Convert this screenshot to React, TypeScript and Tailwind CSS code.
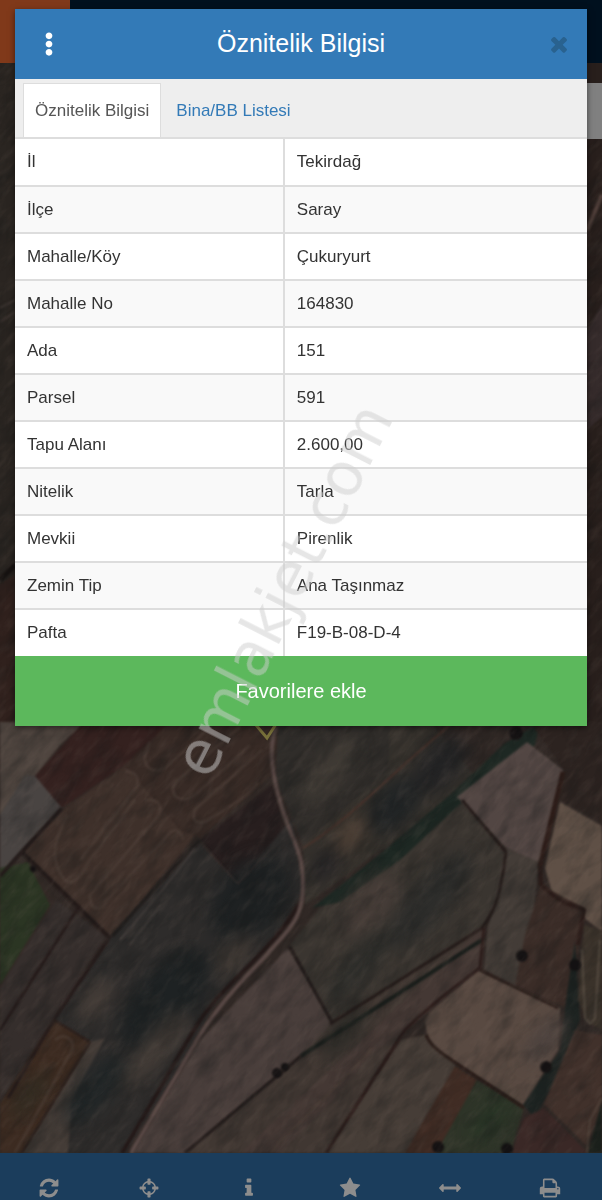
import React, { useState } from 'react'
import { FaEllipsisV } from 'react-icons/fa'

const rows = [
  ['İl', 'Tekirdağ'],
  ['İlçe', 'Saray'],
  ['Mahalle/Köy', 'Çukuryurt'],
  ['Mahalle No', '164830'],
  ['Ada', '151'],
  ['Parsel', '591'],
  ['Tapu Alanı', '2.600,00'],
  ['Nitelik', 'Tarla'],
  ['Mevkii', 'Pirenlik'],
  ['Zemin Tip', 'Ana Taşınmaz'],
  ['Pafta', 'F19-B-08-D-4'],
]

const timesIcon =
  'M1490 1322q0 40-28 68l-136 136q-28 28-68 28t-68-28l-294-294-294 294q-28 28-68 28t-68-28l-136-136q-28-28-28-68t28-68l294-294-294-294q-28-28-28-68t28-68l136-136q28-28 68-28t68 28l294 294 294-294q28-28 68-28t68 28l136 136q28 28 28 68t-28 68l-294 294 294 294q28 28 28 68z'

const tools = [
  {
    name: 'Yenile',
    d: 'M1639 1056q0 5-1 7-64 268-268 434.5t-478 166.5q-146 0-282.5-55t-243.5-157l-129 129q-19 19-45 19t-45-19-19-45v-448q0-26 19-45t45-19h448q26 0 45 19t19 45-19 45l-137 137q71 66 161 102t187 36q134 0 250-65t186-179q11-17 53-117 8-23 30-23h192q13 0 22.5 9.5t9.5 22.5zm25-800v448q0 26-19 45t-45 19h-448q-26 0-45-19t-19-45 19-45l138-138q-148-137-349-137-134 0-250 65t-186 179q-11 17-53 117-8 23-30 23h-199q-13 0-22.5-9.5t-9.5-22.5v-7q65-268 270-434.5t480-166.5q146 0 284 55.5t245 156.5l130-129q19-19 45-19t45 19 19 45z',
  },
  {
    name: 'Konum',
    d: 'M1325 1024h-109q-26 0-45-19t-19-45v-128q0-26 19-45t45-19h109q-32-108-112.5-188.5t-188.5-112.5v109q0 26-19 45t-45 19h-128q-26 0-45-19t-19-45v-109q-108 32-188.5 112.5t-112.5 188.5h109q26 0 45 19t19 45v128q0 26-19 45t-45 19h-109q32 108 112.5 188.5t188.5 112.5v-109q0-26 19-45t45-19h128q26 0 45 19t19 45v109q108-32 188.5-112.5t112.5-188.5zm339-192v128q0 26-19 45t-45 19h-143q-37 161-154.5 278.5t-278.5 154.5v143q0 26-19 45t-45 19h-128q-26 0-45-19t-19-45v-143q-161-37-278.5-154.5t-154.5-278.5h-143q-26 0-45-19t-19-45v-128q0-26 19-45t45-19h143q37-161 154.5-278.5t278.5-154.5v-143q0-26 19-45t45-19h128q26 0 45 19t19 45v143q161 37 278.5 154.5t154.5 278.5h143q26 0 45 19t19 45z',
  },
  {
    name: 'Bilgi',
    d: 'M1216 1344v128q0 26-19 45t-45 19h-512q-26 0-45-19t-19-45v-128q0-26 19-45t45-19h64v-384h-64q-26 0-45-19t-19-45v-128q0-26 19-45t45-19h384q26 0 45 19t19 45v576h64q26 0 45 19t19 45zm-128-1152v192q0 26-19 45t-45 19h-256q-26 0-45-19t-19-45v-192q0-26 19-45t45-19h256q26 0 45 19t19 45z',
  },
  {
    name: 'Favoriler',
    d: 'M1728 647q0 22-26 48l-363 354 86 500q1 7 1 20 0 21-10.5 35.5t-30.5 14.5q-19 0-40-12l-449-236-449 236q-22 12-40 12-21 0-31.5-14.5t-10.5-35.5q0-6 2-20l86-500-364-354q-25-27-25-48 0-37 56-46l502-73 225-455q19-41 49-41t49 41l225 455 502 73q56 9 56 46z',
  },
  {
    name: 'Ölçüm',
    d: 'M1792 896q0 26-19 45l-256 256q-19 19-45 19t-45-19-19-45v-128h-1024v128q0 26-19 45t-45 19-45-19l-256-256q-19-19-19-45t19-45l256-256q19-19 45-19t45 19 19 45v128h1024v-128q0-26 19-45t45-19 45 19l256 256q19 19 19 45z',
  },
  {
    name: 'Yazdır',
    d: 'M448 1536h896v-256h-896v256zm0-640h896v-384h-160q-40 0-68-28t-28-68v-160h-640v640zm1152 64q0-26-19-45t-45-19-45 19-19 45 19 45 45 19 45-19 19-45zm128 0v416q0 13-9.5 22.5t-22.5 9.5h-224v160q0 40-28 68t-68 28h-960q-40 0-68-28t-28-68v-160h-224q-13 0-22.5-9.5t-9.5-22.5v-416q0-79 56.5-135.5t135.5-56.5h64v-544q0-40 28-68t68-28h672q40 0 88 20t76 48l152 152q28 28 48 76t20 88v256h64q79 0 135.5 56.5t56.5 135.5z',
  },
]

// parcels of the satellite view: [points, colour]
const fields = [
  ['0,722 84,722 60,745 35,776 62,808 20,852 0,876', '#4f453f'],
  ['25,775 36,776 62,808 20,852 0,876 0,815', '#494442'],
  ['84,722 175,722 125,765 62,808 35,776', '#34211f'],
  ['62,810 125,766 155,790 195,836 112,936 106,936 22,852', '#3e302a'],
  ['170,722 280,722 272,775 200,838 180,830 125,765', '#372a25'],
  ['200,840 272,785 286,830 238,884', '#271e1e'],
  ['200,843 238,883 292,818 304,890 270,945 215,1005 175,1075 125,1153 20,1153 90,1042 54,1020 112,936', '#2e2c2b'],
  ['0,868 28,862 56,902 0,988', '#2b3523'],
  ['28,862 56,902 60,925 0,1010 0,985 50,905', '#332926'],
  ['56,900 106,936 54,1018 0,1102 0,988', '#352e2c'],
  ['54,1020 90,1042 22,1153 0,1153 0,1104', '#3c2b21'],
  ['90,1042 105,1038 72,1100 68,1153 22,1153', '#443c37'],
  ['280,722 430,722 478,780 305,905 303,845 276,780', '#35312c'],
  ['278,722 390,722 388,770 303,845 276,780', '#302d2a'],
  ['288,948 333,1022 301,1056 185,1153 133,1153 200,1040', '#493e3b'],
  ['460,795 505,848 500,900 485,925 420,970 330,1022 290,945 320,908 400,860', '#3a3530'],
  ['540,722 504,744 450,795 370,862 312,908 340,902 400,860 470,795 535,745', '#1e2823'],
  ['527,742 563,770 558,792 540,864 505,847 457,797', '#524643'],
  ['530,722 602,722 602,822 560,800 564,770', '#2c2320'],
  ['560,802 602,826 602,932 552,892 545,868', '#5f5046'],
  ['506,848 539,862 530,945 515,990 484,970 488,925', '#433c37'],
  ['541,885 584,908 578,945 575,1010 545,1000 515,985 525,935', '#3a2c27'],
  ['484,926 482,966 430,1010 400,1035 325,1153 185,1153 301,1056 333,1022', '#403732'],
  ['484,926 482,966 430,1010 400,1035 370,1055 333,1100 280,1153 240,1153', '#443834'],
  ['478,970 560,1008 558,1050 523,1105 430,1047 425,1022 430,1012', '#594a42'],
  ['400,1040 425,1035 456,1066 405,1153 325,1153', '#463d37'],
  ['455,1066 477,1080 438,1153 405,1153', '#402c24'],
  ['477,1080 524,1108 510,1153 436,1153', '#2e3428'],
  ['575,940 580,1020 550,1090 535,1118 523,1105 560,1050 566,1000', '#1d2321'],
  ['575,1030 602,1035 602,1110 586,1145 544,1104', '#41312b'],
  ['584,925 602,930 602,1030 588,1022 578,1000', '#3a322a'],
  ['524,1118 544,1108 588,1153 512,1153', '#3a2826'],
  ['602,1100 588,1153 602,1153', '#1c211c'],
  ['-9,55 15,55 15,722 -9,722', '#2a2521'],
  ['-9,590 15,575 15,722 -9,722', '#30211d'],
  ['587,55 610,55 610,722 587,722', '#281f1c'],
  ['587,330 610,290 610,410 587,430', '#352b2b'],
]

// hedges and field edges: [path, colour, width]
const edges = [
  ['M0 876 62 808 M22 852 110 938', '#221a19', 4],
  ['M112 936 C135 912 165 875 200 840', '#201d1c', 3],
  ['M120 940 C150 905 175 875 195 848 M130 945 160 905', '#403b39', 2],
  ['M203 845 238 884 270 850', '#403432', 1],
  ['M80 905 0 1030 M108 940 54 1020 8 1098', '#251b1a', 3],
  ['M90 1042 22 1153 M54 1020 90 1042', '#2a1d19', 2],
  ['M303 848 C350 820 400 765 450 725', '#48322b', 2],
  ['M462 800 506 852 C502 880 500 905 482 928 L330 1024', '#241b19', 3],
  ['M290 947 333 1024 M301 1056 185 1153', '#221b1a', 3],
  ['M301 1056 485 938', '#1a1e1b', 4],
  ['M563 772 540 866', '#2c1c18', 5],
  ['M540 866 541 884 C560 905 575 905 584 910 L578 945', '#2b1c19', 4],
  ['M484 928 480 968 C450 990 425 1010 405 1030 L326 1153', '#2a1b19', 3],
  ['M426 1035 C432 1050 440 1052 524 1108', '#281b17', 3],
  ['M270 1153 C330 1090 345 1080 372 1048', '#54463a', 1],
  ['M480 970 558 1008', '#2d201c', 3],
  ['M582 950 585 1018 590 1024 595 1018 600 940', '#544a40', 2],
  ['M602 1098 590 1120 587 1153', '#5d5146', 1],
  ['M587 230 602 195', '#51403b', 4],
  ['M0 322 15 312 M0 308 15 300', '#3f3733', 2],
  ['M0 580 15 565', '#171211', 5],
]

const furrows = [
  'M68 815 C50 845 52 865 65 880 C75 888 80 875 90 860 L135 800 M125 771 C140 772 142 785 130 795 L80 860 M145 800 C160 798 165 808 155 820 L90 895 C90 912 102 912 107 900 L168 835 C175 825 185 835 182 840',
  'M150 742 C138 765 150 775 165 768 L210 727 M250 745 L195 795 C180 805 168 795 175 782 L240 727 M255 785 C262 780 252 790 240 800 L205 822 C190 825 192 812 200 805 L262 750',
  'M55 1040 C65 1032 75 1040 72 1050 L15 1153',
]

// soft light and dark spots in the crops: [cx, cy, rx, ry, colour]
const patches = [
  [165, 1000, 62, 30, '#1e2223'],
  [250, 900, 50, 34, '#1e2122'],
  [95, 1090, 44, 16, '#202526'],
  [155, 1050, 50, 14, '#423b36'],
  [95, 1000, 26, 12, '#453d38'],
  [235, 955, 26, 12, '#403934'],
  [330, 770, 40, 14, '#403b35'],
  [395, 805, 34, 20, '#212425'],
  [350, 835, 24, 12, '#4b3e34'],
  [325, 865, 20, 12, '#272526'],
  [440, 765, 34, 20, '#242425'],
  [430, 900, 60, 20, '#2d2d2b'],
  [370, 905, 36, 18, '#483e39'],
  [360, 965, 46, 14, '#2d2d2a'],
  [345, 1030, 34, 12, '#2b2a26'],
  [545, 1040, 30, 12, '#4c423e'],
  [30, 1095, 28, 9, '#302b21'],
  [490, 1120, 26, 10, '#2a3827'],
]

const SatelliteMap = () => (
  <svg
    className="absolute inset-0 h-full w-full"
    viewBox="0 63 602 1090"
    preserveAspectRatio="xMidYMax slice"
    aria-hidden="true"
  >
    <defs>
      <filter id="soft" x="-5%" y="-5%" width="110%" height="110%" colorInterpolationFilters="sRGB">
        <feGaussianBlur stdDeviation="1" />
      </filter>
      <filter id="patch" x="-50%" y="-50%" width="200%" height="200%" colorInterpolationFilters="sRGB">
        <feGaussianBlur stdDeviation="8" />
      </filter>
      <filter id="soil" x="0" y="0" width="100%" height="100%" colorInterpolationFilters="sRGB">
        <feTurbulence type="fractalNoise" baseFrequency="0.05 0.14" numOctaves="4" seed="7" />
        <feColorMatrix values="0 0 0 0 0.5  0 0 0 0 0.44  0 0 0 0 0.4  1.6 0 0 0 -0.7" />
      </filter>
      <filter id="shade" x="0" y="0" width="100%" height="100%" colorInterpolationFilters="sRGB">
        <feTurbulence type="fractalNoise" baseFrequency="0.03 0.07" numOctaves="4" seed="21" />
        <feColorMatrix values="0 0 0 0 0.07  0 0 0 0 0.08  0 0 0 0 0.08  2 0 0 0 -0.85" />
      </filter>
    </defs>
    <rect y="63" width="602" height="1090" fill="#302825" />
    <g filter="url(#soft)">
      {fields.map(([points, fill]) => (
        <polygon key={points} points={points} fill={fill} />
      ))}
    </g>
    <g filter="url(#patch)">
      {patches.map(([cx, cy, rx, ry, fill]) => (
        <ellipse
          key={`${cx}-${cy}`}
          cx={cx}
          cy={cy}
          rx={rx}
          ry={ry}
          fill={fill as string}
          transform={`rotate(-50 ${cx} ${cy})`}
        />
      ))}
    </g>
    <g fill="none" filter="url(#soft)">
      {furrows.map((d) => (
        <path key={d} d={d} stroke="#574941" strokeWidth="3" opacity="0.4" />
      ))}
      {edges.map(([d, stroke, width]) => (
        <path key={d} d={d as string} stroke={stroke as string} strokeWidth={width} />
      ))}
      <path d="M299 905 C285 930 255 960 225 990 S190 1040 122 1153" stroke="#241918" strokeWidth="4" />
      <path
        d="M276 727 C268 750 272 775 282 808 S303 850 303 885 S288 930 268 953 S215 1005 190 1052 L131 1153"
        stroke="#584845"
        strokeWidth="4"
      />
    </g>
    <g fill="#141112" filter="url(#soft)">
      <circle cx="277" cy="1073" r="5" />
      <circle cx="285" cy="1067" r="4" />
      <circle cx="33" cy="869" r="3" />
      <circle cx="522" cy="956" r="6" />
      <circle cx="575" cy="965" r="6" />
      <circle cx="546" cy="1067" r="6" />
      <circle cx="507" cy="1149" r="6" />
      <circle cx="438" cy="1147" r="6" />
      <circle cx="516" cy="733" r="7" />
    </g>
    <g transform="rotate(-50 301 900)">
      <rect x="-600" y="0" width="1700" height="1500" filter="url(#soil)" opacity="0.2" />
      <rect x="-600" y="0" width="1700" height="1500" filter="url(#shade)" opacity="0.35" />
    </g>
    <path d="M250 718 267 738 280 718" fill="none" stroke="#77703a" strokeWidth="3" />
  </svg>
)

const App = () => {
  const [tab, setTab] = useState('oznitelik')

  return (
    <div className="relative flex min-h-screen flex-col overflow-hidden bg-[#302825] font-['Liberation_Sans',Arial,sans-serif] text-[17px] text-[#333333]">
      <div className="h-[63px] bg-[#00101e]">
        <div className="h-full w-[70px] bg-[#80391a]" />
      </div>
      <div className="relative flex-1">
        <SatelliteMap />
        <div className="absolute top-5 right-0 h-14 w-40 bg-[#808080]" />
      </div>
      <nav className="grid h-[47px] grid-cols-6 overflow-hidden bg-[#1b3d5c] text-[#8d8d8d]">
        {tools.map((tool) => (
          <button key={tool.name} type="button" aria-label={tool.name} className="flex justify-center pt-6 pr-[3px]">
            <svg viewBox="0 0 1792 1792" className="size-[22px] shrink-0" fill="currentColor">
              <path d={tool.d} />
            </svg>
          </button>
        ))}
      </nav>

      <section className="absolute inset-x-[15px] top-[9px] bg-white shadow-[0_2px_6px_rgba(0,0,0,0.5)]">
        <header className="grid h-[70px] grid-cols-[68px_1fr_68px] items-center bg-[#337ab7] text-white">
          <button type="button" aria-label="Menü" className="flex justify-center">
            <FaEllipsisV className="size-6" />
          </button>
          <h1 className="text-center text-[25px]">Öznitelik Bilgisi</h1>
          <button type="button" aria-label="Kapat" className="flex justify-end pr-4 text-[#29628f]">
            <svg viewBox="0 0 1792 1792" className="size-6" fill="currentColor">
              <path d={timesIcon} />
            </svg>
          </button>
        </header>

        <div className="flex h-[60px] items-end border-b-2 border-[#dddddd] bg-[#eeeeee] pl-2" role="tablist">
          <button
            type="button"
            role="tab"
            aria-selected={tab === 'oznitelik'}
            onClick={() => setTab('oznitelik')}
            className="h-[54px] border border-b-0 border-[#dddddd] bg-white px-[11px] text-[#555555]"
          >
            Öznitelik Bilgisi
          </button>
          <button
            type="button"
            role="tab"
            aria-selected={tab === 'bina'}
            onClick={() => setTab('bina')}
            className="h-[54px] border border-b-0 border-transparent px-[14px] text-[#337ab7]"
          >
            Bina/BB Listesi
          </button>
        </div>

        <table className="w-full table-fixed">
          <tbody>
            {rows.map(([label, value]) => (
              <tr key={label} className="h-[47px] border-b-2 border-[#dddddd] last:border-b-0 even:bg-[#f9f9f9]">
                <th scope="row" className="w-[47%] border-r-2 border-[#dddddd] px-3 text-left font-normal">
                  {label}
                </th>
                <td className="px-3">{value}</td>
              </tr>
            ))}
          </tbody>
        </table>

        <button type="button" className="block h-[70px] w-full bg-[#5cb85c] text-[20px] text-white">
          Favorilere ekle
        </button>
      </section>

      <div className="pointer-events-none absolute inset-x-0 top-[560px] flex justify-center pr-9">
        <span className="-rotate-63 font-['DejaVu_Sans',Verdana,sans-serif] text-[60px] leading-none text-[#cdcdcd]/50">
          emlakjet.com
        </span>
      </div>
    </div>
  )
}

export default App
